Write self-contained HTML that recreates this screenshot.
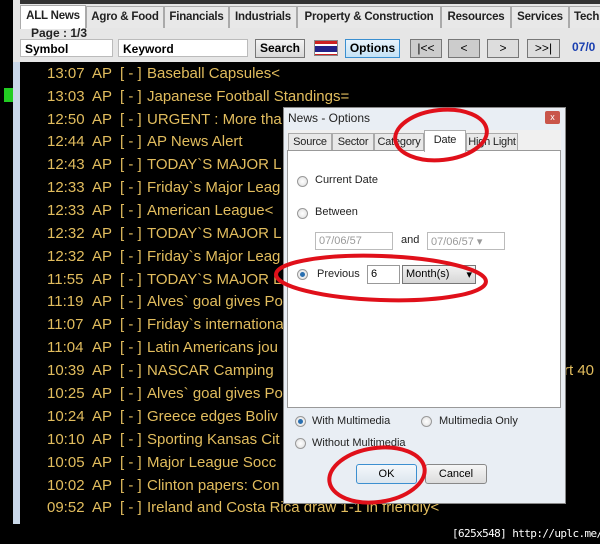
<!DOCTYPE html><html><head><style>
body{margin:0;width:600px;height:544px;background:#000;position:relative;overflow:hidden;font-family:"Liberation Sans",sans-serif}
.a{position:absolute}
.top{left:13px;top:0;width:587px;height:62px;background:#e6e6e6}
.tab{position:absolute;top:6px;height:21px;border:1px solid #aaa;border-bottom:none;background:#e8e8e8;font:bold 11.5px "Liberation Sans";letter-spacing:-0.2px;line-height:21px;text-align:center;color:#222;white-space:nowrap;overflow:hidden}
.inp{position:absolute;top:39px;height:18px;background:#fff;border:1px solid #bbb;font:bold 12px "Liberation Sans";line-height:18px;padding-left:4px;box-sizing:border-box}
.btn{position:absolute;top:39px;height:19px;border:1px solid #777;background:linear-gradient(#f4f4f4,#d8d8d8);font:bold 12px "Liberation Sans";line-height:17px;text-align:center;box-sizing:border-box}
.row{position:absolute;left:47px;color:#e2bd5e;font-size:15px;white-space:nowrap}
.row span{position:absolute}
.dt{font-size:12px;color:#222;white-space:nowrap}
.rad{position:absolute;width:11px;height:11px;border-radius:50%;border:1px solid #999;background:radial-gradient(#fff,#ddd);box-sizing:border-box}
.rad.on::after{content:"";position:absolute;left:2px;top:2px;width:5px;height:5px;border-radius:50%;background:#2a6fb0}
</style></head><body>
<div class="a" style="left:13px;top:0;width:7px;height:524px;background:#c9d7e8"></div>
<div class="a" style="left:4px;top:88px;width:9px;height:14px;background:#2c2"></div>
<div class="a top"></div>
<div class="a" style="left:20px;top:0;width:580px;height:4px;background:#333"></div>
<div class="tab" style="left:20px;width:64px;background:#fff;top:5px;height:23px">ALL News</div>
<div class="tab" style="left:86px;width:76px">Agro &amp; Food</div>
<div class="tab" style="left:164px;width:63px">Financials</div>
<div class="tab" style="left:229px;width:66px">Industrials</div>
<div class="tab" style="left:297px;width:142px">Property &amp; Construction</div>
<div class="tab" style="left:441px;width:68px">Resources</div>
<div class="tab" style="left:511px;width:56px">Services</div>
<div class="tab" style="left:569px;width:40px;text-align:left;padding-left:4px">Tech</div>
<div class="a" style="left:31px;top:26px;font:bold 12px 'Liberation Sans';color:#222">Page : 1/3</div>
<div class="inp" style="left:20px;width:93px">Symbol</div>
<div class="inp" style="left:118px;width:130px">Keyword</div>
<div class="btn" style="left:255px;width:50px">Search</div>
<div class="a" style="left:314px;top:40px;width:24px;height:16px;background:repeating-linear-gradient(#c22 0 3px,#fff 3px 5px,#228 5px 11px,#fff 11px 13px,#c22 13px 16px);border:1px solid #888;box-sizing:border-box"></div>
<div class="btn" style="left:345px;width:55px;border-color:#3a8fd0;background:linear-gradient(#e8f4fc,#c4e2f6)">Options</div>
<div class="btn" style="left:410px;width:32px;font-weight:normal;background:#ccc">|&lt;&lt;</div>
<div class="btn" style="left:448px;width:32px;font-weight:normal;background:#ccc">&lt;</div>
<div class="btn" style="left:487px;width:32px;font-weight:normal;background:#ddd">&gt;</div>
<div class="btn" style="left:527px;width:33px;font-weight:normal;background:#ddd">&gt;&gt;|</div>
<div class="a" style="left:572px;top:40px;font:bold 12px 'Liberation Sans';color:#1a3fb0">07/0</div>

<div class="row" style="top:65px"><span>13:07</span><span style="left:45px">AP</span><span style="left:73px">[ - ]</span><span style="left:100px">Baseball Capsules&lt;</span></div>
<div class="row" style="top:88px"><span>13:03</span><span style="left:45px">AP</span><span style="left:73px">[ - ]</span><span style="left:100px">Japanese Football Standings=</span></div>
<div class="row" style="top:111px"><span>12:50</span><span style="left:45px">AP</span><span style="left:73px">[ - ]</span><span style="left:100px">URGENT : More tha</span></div>
<div class="row" style="top:133px"><span>12:44</span><span style="left:45px">AP</span><span style="left:73px">[ - ]</span><span style="left:100px">AP News Alert</span></div>
<div class="row" style="top:156px"><span>12:43</span><span style="left:45px">AP</span><span style="left:73px">[ - ]</span><span style="left:100px">TODAY`S MAJOR L</span></div>
<div class="row" style="top:179px"><span>12:33</span><span style="left:45px">AP</span><span style="left:73px">[ - ]</span><span style="left:100px">Friday`s Major Leag</span></div>
<div class="row" style="top:202px"><span>12:33</span><span style="left:45px">AP</span><span style="left:73px">[ - ]</span><span style="left:100px">American League&lt;</span></div>
<div class="row" style="top:225px"><span>12:32</span><span style="left:45px">AP</span><span style="left:73px">[ - ]</span><span style="left:100px">TODAY`S MAJOR L</span></div>
<div class="row" style="top:248px"><span>12:32</span><span style="left:45px">AP</span><span style="left:73px">[ - ]</span><span style="left:100px">Friday`s Major Leag</span></div>
<div class="row" style="top:271px"><span>11:55</span><span style="left:45px">AP</span><span style="left:73px">[ - ]</span><span style="left:100px">TODAY`S MAJOR L</span></div>
<div class="row" style="top:293px"><span>11:19</span><span style="left:45px">AP</span><span style="left:73px">[ - ]</span><span style="left:100px">Alves` goal gives Po</span></div>
<div class="row" style="top:316px"><span>11:07</span><span style="left:45px">AP</span><span style="left:73px">[ - ]</span><span style="left:100px">Friday`s internationa</span></div>
<div class="row" style="top:339px"><span>11:04</span><span style="left:45px">AP</span><span style="left:73px">[ - ]</span><span style="left:100px">Latin Americans jou</span></div>
<div class="row" style="top:362px"><span>10:39</span><span style="left:45px">AP</span><span style="left:73px">[ - ]</span><span style="left:100px">NASCAR Camping</span><span style="left:517px">rt 40</span></div>
<div class="row" style="top:385px"><span>10:25</span><span style="left:45px">AP</span><span style="left:73px">[ - ]</span><span style="left:100px">Alves` goal gives Po</span></div>
<div class="row" style="top:408px"><span>10:24</span><span style="left:45px">AP</span><span style="left:73px">[ - ]</span><span style="left:100px">Greece edges Boliv</span></div>
<div class="row" style="top:431px"><span>10:10</span><span style="left:45px">AP</span><span style="left:73px">[ - ]</span><span style="left:100px">Sporting Kansas Cit</span></div>
<div class="row" style="top:454px"><span>10:05</span><span style="left:45px">AP</span><span style="left:73px">[ - ]</span><span style="left:100px">Major League Socc</span></div>
<div class="row" style="top:477px"><span>10:02</span><span style="left:45px">AP</span><span style="left:73px">[ - ]</span><span style="left:100px">Clinton papers: Con</span></div>
<div class="row" style="top:499px"><span>09:52</span><span style="left:45px">AP</span><span style="left:73px">[ - ]</span><span style="left:100px">Ireland and Costa Rica draw 1-1 in friendly&lt;</span></div>

<div class="a" style="left:283px;top:107px;width:283px;height:397px;background:#e9eef4;border:1px solid #888;box-sizing:border-box"></div>
<div class="a dt" style="left:288px;top:111px;font-size:12px">News - Options</div>
<div class="a" style="left:545px;top:111px;width:15px;height:13px;background:#c9554a;border-radius:2px;color:#fff;font-size:9px;text-align:center;line-height:13px">x</div>
<div class="a" style="left:287px;top:150px;width:274px;height:258px;background:#fff;border:1px solid #999;box-sizing:border-box"></div>
<div class="a" style="left:287px;top:130px;width:274px;height:20px;background:#f0f0f0"></div>
<div class="tab dt" style="top:133px;left:288px;width:42px;height:16px;line-height:16px;font-weight:normal;font-size:11px">Source</div>
<div class="tab dt" style="top:133px;left:332px;width:40px;height:16px;line-height:16px;font-weight:normal;font-size:11px">Sector</div>
<div class="tab dt" style="top:133px;left:374px;width:48px;height:16px;line-height:16px;font-weight:normal;font-size:11px">Category</div>
<div class="tab dt" style="top:130px;left:424px;width:40px;height:21px;line-height:18px;font-weight:normal;font-size:11px;background:#fff">Date</div>
<div class="tab dt" style="top:133px;left:466px;width:50px;height:16px;line-height:16px;font-weight:normal;font-size:11px">High Light</div>
<div class="rad" style="left:297px;top:176px"></div><div class="a dt" style="left:315px;top:174px;font-size:11px">Current Date</div>
<div class="rad" style="left:297px;top:208px"></div><div class="a dt" style="left:315px;top:206px;font-size:11px">Between</div>
<div class="a" style="left:315px;top:232px;width:78px;height:18px;border:1px solid #bbb;box-sizing:border-box;font-size:11px;color:#999;padding:2px 3px">07/06/57</div>
<div class="a dt" style="left:401px;top:234px;font-size:11px">and</div>
<div class="a" style="left:427px;top:232px;width:78px;height:18px;border:1px solid #bbb;box-sizing:border-box;font-size:11px;color:#999;padding:2px 3px">07/06/57 ▾</div>
<div class="rad on" style="left:297px;top:269px"></div><div class="a dt" style="left:317px;top:268px;font-size:11px">Previous</div>
<div class="a" style="left:367px;top:265px;width:33px;height:19px;border:1px solid #999;box-sizing:border-box;font-size:11px;padding:2px 3px;background:#fff">6</div>
<div class="a" style="left:402px;top:265px;width:74px;height:19px;border:1px solid #777;box-sizing:border-box;font-size:11px;padding:2px 3px;background:linear-gradient(#f2f2f2,#d6d6d6)">Month(s) <span style="float:right">▾</span></div>
<div class="rad on" style="left:295px;top:416px"></div><div class="a dt" style="left:312px;top:415px;font-size:11px">With Multimedia</div>
<div class="rad" style="left:421px;top:416px"></div><div class="a dt" style="left:439px;top:415px;font-size:11px">Multimedia Only</div>
<div class="rad" style="left:295px;top:438px"></div><div class="a dt" style="left:312px;top:437px;font-size:11px">Without Multimedia</div>
<div class="a" style="left:356px;top:464px;width:61px;height:20px;border:1px solid #3c8fd0;border-radius:3px;box-sizing:border-box;background:linear-gradient(#f4f8fb,#dce6ee);font-size:11px;text-align:center;line-height:18px">OK</div>
<div class="a" style="left:425px;top:464px;width:62px;height:20px;border:1px solid #888;border-radius:3px;box-sizing:border-box;background:linear-gradient(#f6f6f6,#dcdcdc);font-size:11px;text-align:center;line-height:18px">Cancel</div>

<svg class="a" style="left:0;top:0" width="600" height="544"><g fill="none" stroke="#e0101a" stroke-width="4">
<ellipse cx="441" cy="135" rx="46" ry="25" transform="rotate(-6 441 135)"/>
<ellipse cx="381" cy="278" rx="105" ry="22" transform="rotate(2 381 278)"/>
<ellipse cx="377" cy="475" rx="48" ry="27" transform="rotate(-8 377 475)"/></g></svg>
<div class="a" style="left:452px;top:527px;color:#fff;font:11px 'DejaVu Sans Mono',monospace;white-space:nowrap;letter-spacing:-0.6px">[625x548] http://uplc.me/</div>
</body></html>
